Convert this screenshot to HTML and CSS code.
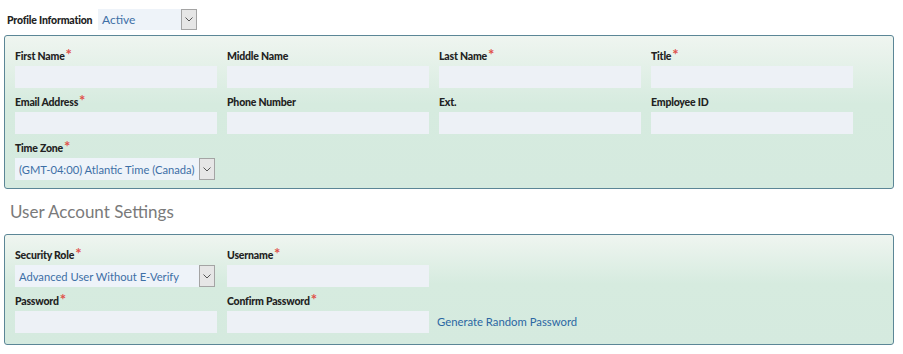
FILE: index.html
```html
<!DOCTYPE html>
<html lang="en">
<head>
    <meta charset="UTF-8">
    <title>User Profile</title>
    <link rel="stylesheet" href="styles.css">
</head>
<body>
    <div class="page">
        <div class="profile-head">
            <span class="head-label">Profile Information</span>
            <div class="select select-status">
                <span class="select-text">Active</span>
                <span class="select-arrow"><svg width="8" height="5" viewBox="0 0 8 5"><path d="M0.5 0.5 L4 4 L7.5 0.5" fill="none" stroke="#555" stroke-width="1"/></svg></span>
            </div>
        </div>

        <div class="panel">
            <div class="field">
                <label>First Name<span class="req">*</span></label>
                <div class="input"></div>
            </div>
            <div class="field">
                <label>Middle Name</label>
                <div class="input"></div>
            </div>
            <div class="field">
                <label>Last Name<span class="req">*</span></label>
                <div class="input"></div>
            </div>
            <div class="field">
                <label>Title<span class="req">*</span></label>
                <div class="input"></div>
            </div>

            <div class="field">
                <label>Email Address<span class="req">*</span></label>
                <div class="input"></div>
            </div>
            <div class="field">
                <label>Phone Number</label>
                <div class="input"></div>
            </div>
            <div class="field">
                <label>Ext.</label>
                <div class="input"></div>
            </div>
            <div class="field">
                <label>Employee ID</label>
                <div class="input"></div>
            </div>

            <div class="field">
                <label>Time Zone<span class="req">*</span></label>
                <div class="select select-wide">
                    <span class="select-text">(GMT-04:00) Atlantic Time (Canada)</span>
                    <span class="select-arrow"><svg width="8" height="5" viewBox="0 0 8 5"><path d="M0.5 0.5 L4 4 L7.5 0.5" fill="none" stroke="#555" stroke-width="1"/></svg></span>
                </div>
            </div>
        </div>

        <h2 class="section-title">User Account Settings</h2>

        <div class="panel panel-account">
            <div class="field">
                <label>Security Role<span class="req">*</span></label>
                <div class="select select-wide">
                    <span class="select-text">Advanced User Without E-Verify</span>
                    <span class="select-arrow"><svg width="8" height="5" viewBox="0 0 8 5"><path d="M0.5 0.5 L4 4 L7.5 0.5" fill="none" stroke="#555" stroke-width="1"/></svg></span>
                </div>
            </div>
            <div class="field">
                <label>Username<span class="req">*</span></label>
                <div class="input"></div>
            </div>
            <div class="field-break"></div>

            <div class="field">
                <label>Password<span class="req">*</span></label>
                <div class="input"></div>
            </div>
            <div class="field">
                <label>Confirm Password<span class="req">*</span></label>
                <div class="input"></div>
            </div>
            <a class="gen-link" href="#">Generate Random Password</a>
        </div>
    </div>
</body>
</html>
```

FILE: styles.css
```css
body {
    margin: 0;
    padding: 0;
    font-family: Lato, "Liberation Sans", sans-serif;
    background: #fff;
    color: #333;
}

.page {
    padding: 0 4px;
    width: 890px;
}

.profile-head {
    display: flex;
    align-items: center;
    padding: 9px 0 0 3px;
    height: 21px;
    margin-bottom: 5px;
}

.head-label {
    width: 91px;
    font-size: 10.5px;
    font-weight: 900;
    letter-spacing: -0.2px;
    color: #222;
}

.select {
    display: flex;
    align-items: center;
    height: 22px;
    background: #eef3f9;
    box-sizing: border-box;
}

.select-status {
    width: 99px;
    height: 21px;
}

.select-wide {
    width: 200px;
}

.select-text {
    flex: 1;
    padding-left: 4px;
    font-size: 11.2px;
    color: #3d6fa6;
    white-space: nowrap;
    overflow: hidden;
}

.select-status .select-text {
    font-size: 12px;
}

.select-arrow {
    width: 16px;
    height: 100%;
    box-sizing: border-box;
    border: 1px solid #a4a4a4;
    background: #e6e6e6;
    display: flex;
    align-items: center;
    justify-content: center;
}

.panel {
    border: 1px solid #5b8696;
    border-radius: 3px;
    background: linear-gradient(to bottom, #eff5f0, #d6ebdf 45%, #d5eadf);
    padding: 6px 10px 8px;
    display: grid;
    grid-template-columns: repeat(4, 202px);
    column-gap: 10px;
}

.panel-account {
    padding-bottom: 11px;
}

.field {
    display: flex;
    flex-direction: column;
}

.field label {
    height: 24px;
    box-sizing: border-box;
    padding-bottom: 3px;
    display: flex;
    align-items: flex-end;
    font-size: 10.5px;
    font-weight: 900;
    letter-spacing: -0.2px;
    line-height: 14px;
    color: #222;
}

.req {
    color: #e0504a;
    font-size: 15px;
    font-weight: bold;
    line-height: 0;
    position: relative;
    top: -9px;
    margin-left: 1px;
}

.input {
    height: 22px;
    background: #edf1f6;
}

.field-break {
    grid-column: span 2;
}

.gen-link {
    align-self: end;
    line-height: 22px;
    margin-left: -2px;
    font-size: 11.3px;
    color: #2b67a3;
    text-decoration: none;
}

.section-title {
    margin: 13px 0 12px;
    padding-left: 6px;
    font-size: 17px;
    line-height: 20px;
    font-weight: normal;
    color: #7a7a7a;
}
```
